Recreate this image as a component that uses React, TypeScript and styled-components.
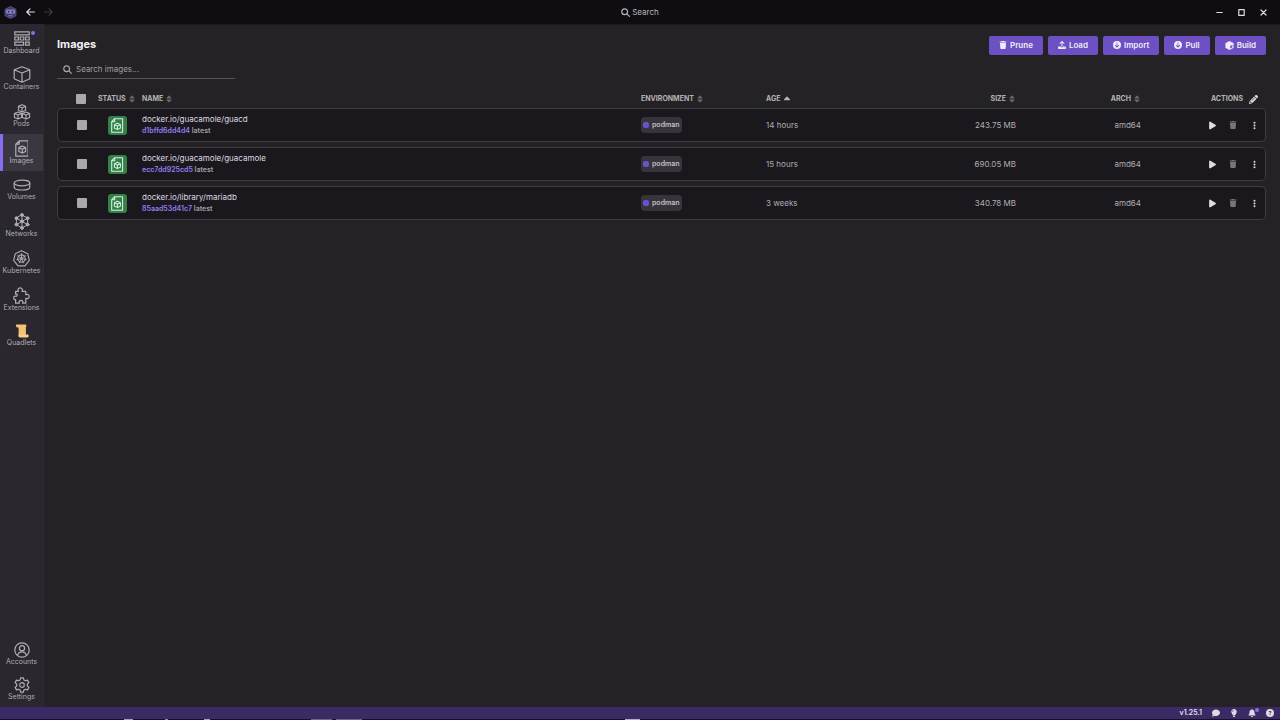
import React from 'react';
import styled, { createGlobalStyle } from 'styled-components';
import { FaTrash, FaUpload, FaCircleArrowDown, FaPlay, FaPencil, FaEllipsisVertical, FaComment, FaLightbulb, FaBell, FaCircleQuestion, FaSort, FaCaretUp } from 'react-icons/fa6';

const GlobalStyle = createGlobalStyle`
  * { box-sizing: border-box; }
  body {
    margin: 0;
    background: #242225;
    color: #c8c5cb;
    font: 400 8px/12px Inter, "Liberation Sans", sans-serif;
  }
  button, input { font: inherit; color: inherit; }
  button { border: 0; padding: 0; background: none; cursor: pointer; }
  svg { display: block; flex: none; }
`;

const Shell = styled.div`
  display: flex;
  flex-direction: column;
  min-height: 100vh;
`;

const TitleBar = styled.header`
  display: grid;
  grid-template-columns: 1fr auto 1fr;
  align-items: center;
  height: 25px;
  background: #0f0d11;
  border-bottom: 1px solid #1b191d;
`;

const BarGroup = styled.div<{ $end?: boolean; $gap: number }>`
  display: flex;
  align-items: center;
  justify-content: ${(p) => (p.$end ? 'flex-end' : 'flex-start')};
  gap: ${(p) => p.$gap}px;
  padding: ${(p) => (p.$end ? '0 13px 0 0' : '0 0 0 4px')};
`;

const IconButton = styled.button<{ $color?: string }>`
  position: relative;
  display: flex;
  align-items: center;
  justify-content: center;
  color: ${(p) => p.$color ?? '#dedce0'};
`;

const SearchButton = styled.button`
  display: flex;
  align-items: center;
  gap: 2px;
  color: #b9b6bc;
`;

const Body = styled.div`
  display: flex;
  flex: 1;
`;

const Sidebar = styled.nav`
  display: flex;
  flex-direction: column;
  justify-content: space-between;
  width: 44px;
  flex: none;
  margin-top: -1px;
  background: #2a272e;
  border-right: 1px solid #2f2c33;
`;

const NavList = styled.div<{ $rows: string }>`
  display: grid;
  grid-template-columns: 100%;
  grid-template-rows: ${(p) => p.$rows};
`;

const NavLink = styled.a<{ $active?: boolean }>`
  display: flex;
  flex-direction: column;
  align-items: center;
  justify-content: flex-end;
  padding-bottom: 6px;
  background: ${(p) => (p.$active ? '#3b3740' : 'transparent')};
  box-shadow: ${(p) => (p.$active ? 'inset 3px 0 #8b6cf0' : 'none')};
  color: #b0adb3;
  font-size: 7px;
  line-height: 8px;
  text-decoration: none;
`;

const NavIcon = styled.span`
  position: relative;
  display: flex;
  align-items: center;
  justify-content: center;
  height: 17px;
`;

const Dot = styled.i<{ $top: number; $right: number }>`
  position: absolute;
  top: ${(p) => p.$top}px;
  right: ${(p) => p.$right}px;
  width: 4px;
  height: 4px;
  border-radius: 50%;
  background: #8b6cf0;
`;

const Main = styled.main`
  flex: 1;
  min-width: 0;
  padding: 11px 14px 0 13px;
`;

const Heading = styled.div`
  display: flex;
  align-items: flex-start;
  justify-content: space-between;
`;

const Title = styled.h1`
  margin: 0;
  color: #f4f2f6;
  font-size: 11px;
  line-height: 16px;
  font-weight: 700;
`;

const Actions = styled.div`
  display: flex;
  gap: 5px;
`;

const PrimaryButton = styled.button`
  display: flex;
  align-items: center;
  gap: 3px;
  height: 19px;
  padding: 0 10px 1px;
  border-radius: 2px;
  background: #6c50c4;
  color: #f0edf8;
  font-weight: 600;
`;

const SearchField = styled.label`
  display: flex;
  align-items: center;
  gap: 4px;
  width: 178px;
  height: 19px;
  margin-top: 5px;
  padding-left: 6px;
  border-bottom: 1px solid #56535a;
  color: #aaa7ad;
  input {
    flex: 1;
    min-width: 0;
    padding: 0;
    border: 0;
    outline: 0;
    background: none;
  }
  input::placeholder { color: #a09da3; opacity: 1; }
`;

const Table = styled.table`
  width: 100%;
  margin-top: 11px;
  table-layout: fixed;
  border-collapse: separate;
  border-spacing: 0 5px;
`;

const Col = styled.col<{ $width?: number }>`
  width: ${(p) => (p.$width ? `${p.$width}px` : 'auto')};
`;

type Align = { $align?: 'left' | 'right'; $inset?: number };

const Th = styled.th<Align>`
  height: 8px;
  padding: 0 ${(p) => p.$inset ?? 0}px 0 0;
  color: #b5b2b8;
  font-size: 7px;
  line-height: 8px;
  font-weight: 700;
  text-align: ${(p) => p.$align ?? 'left'};
`;

const HeadLabel = styled.span<{ $gap?: number }>`
  display: inline-flex;
  align-items: center;
  gap: ${(p) => p.$gap ?? 2}px;
  height: 8px;
  vertical-align: top;
`;

const Td = styled.td<Align>`
  height: 34px;
  padding: 0;
  border: solid #3f3c43;
  border-width: 1px 0;
  background: #1a181d;
  color: #b0adb3;
  text-align: ${(p) => p.$align ?? 'left'};
  &:first-child { border-left-width: 1px; border-radius: 5px 0 0 5px; }
  &:last-child { border-right-width: 1px; border-radius: 0 5px 5px 0; }
`;

const Check = styled.input`
  appearance: none;
  display: block;
  width: 10px;
  height: 10px;
  margin: -1px 0 -1px 19px;
  border-radius: 1px;
  background: #aaa7ad;
`;

const StatusBadge = styled.span`
  display: flex;
  align-items: center;
  justify-content: center;
  width: 19px;
  height: 19px;
  margin-left: 10px;
  border-radius: 3px;
  background: #33804a;
  color: #d9f0df;
`;

const Name = styled.div`
  color: #dddae0;
`;

const Meta = styled.div`
  font-size: 7px;
  font-weight: 600;
  color: #a29fa5;
  b { font-weight: 600; color: #9a7cf0; }
`;

const EnvTag = styled.span`
  display: inline-flex;
  align-items: center;
  gap: 3px;
  height: 16px;
  padding: 0 2px;
  border-radius: 4px;
  background: #37343b;
  color: #c4c1c7;
  font-size: 7px;
  font-weight: 600;
  vertical-align: middle;
  &::before {
    content: '';
    width: 6px;
    height: 6px;
    border-radius: 2px;
    background: #6d50cc;
  }
`;

const RowActions = styled.div`
  display: grid;
  grid-template-columns: repeat(3, 10px);
  column-gap: 11px;
  justify-content: end;
  padding-right: 6px;
`;

const StatusBar = styled.footer`
  display: flex;
  align-items: center;
  justify-content: flex-end;
  gap: 10px;
  height: 12px;
  padding: 0 6px;
  background: #3b2a66;
  color: #e6e2ee;
  font-size: 7px;
  font-weight: 600;
`;

const DesktopEdge = styled.div`
  height: 1px;
  background:
    linear-gradient(90deg, transparent 124px, #a79fc0 124px 133px, transparent 133px 165px, #8d84a6 165px 168px, transparent 168px 204px, #a79fc0 204px 210px, transparent 210px 625px, #b5acc8 625px 640px, transparent 640px),
    linear-gradient(90deg, transparent 311px, #6f667f 311px 332px, transparent 332px 336px, #6f667f 336px 362px, transparent 362px),
    #1a0f2b;
`;

const line = { fill: 'none', stroke: 'currentColor', strokeWidth: 1.2, strokeLinejoin: 'round' as const, strokeLinecap: 'round' as const };

const Logo = () => (
  <svg width="13" height="13" viewBox="0 0 12 12">
    <path d="M6 .5 11 3v6L6 11.5 1 9V3z" fill="#43376f" stroke="#6a5da0" strokeWidth=".7" />
    <rect x="1.8" y="3.3" width="8.4" height="3.8" rx="1.4" fill="#8288bd" />
    <circle cx="4.2" cy="5.2" r=".8" fill="#2b2350" />
    <circle cx="7.8" cy="5.2" r=".8" fill="#2b2350" />
    <path d="M4 9h4" stroke="#8a6fc4" />
  </svg>
);

const Arrow = ({ back }: { back?: boolean }) => (
  <svg width="9" height="8" viewBox="0 0 9 8" {...line}>
    <path d={back ? 'M8.4 4H.8M4 .8.8 4 4 7.2' : 'M.6 4h7.6M5 .8 8.2 4 5 7.2'} />
  </svg>
);

const Magnifier = () => (
  <svg width="9" height="9" viewBox="0 0 9 9" {...line}>
    <circle cx="3.7" cy="3.7" r="2.9" />
    <path d="m5.9 5.9 2.5 2.5" />
  </svg>
);

const DashboardIcon = () => (
  <svg width="16" height="15" viewBox="0 0 16 15" {...line} strokeLinejoin="miter">
    <path d="M.8.8h14.4v3H.8zM.8 6h3.6v3H.8zM6.2 6h3.6v3H6.2zM11.6 6h3.6v3h-3.6zM.8 11.2h8.8v3H.8zM11.6 11.2h3.6v3h-3.6z" />
  </svg>
);

const ContainerIcon = () => (
  <svg width="18" height="17" viewBox="0 0 18 17" {...line}>
    <path d="M9 .8 16.8 3.8v9L9 16.2 1.2 12.8v-9zM1.2 3.8 9 7l7.8-3.2M9 7v9.2" />
  </svg>
);

const cube = (x: number, y: number) =>
  `M${x} ${y}l3.6 1.5v4l-3.6 1.6-3.6-1.6V${y + 1.5}zM${x - 3.6} ${y + 1.5}l3.6 1.6 3.6-1.6M${x} ${y + 3.1}v4`;

const PodsIcon = () => (
  <svg width="18" height="16" viewBox="0 0 18 16" {...line} strokeWidth={1.1}>
    <path d={cube(9, 0.8) + cube(5, 8) + cube(13, 8)} />
  </svg>
);

const ImageIcon = ({ size = 17 }: { size?: number }) => (
  <svg width={size * 0.82} height={size} viewBox="0 0 14 17" {...line}>
    <path d="M4.2.8h9v15.4H.8V4.2zM4.2.8v3.4H.8" />
    <path d="m7.3 6 3.4 1.6v3.9l-3.4 1.6-3.4-1.6V7.6zM3.9 7.6l3.4 1.6 3.4-1.6M7.3 9.2v3.9" />
  </svg>
);

const VolumeIcon = () => (
  <svg width="18" height="12" viewBox="0 0 18 12" {...line}>
    <ellipse cx="9" cy="4" rx="7.8" ry="2.8" />
    <path d="M1.2 4v4.2C1.2 9.8 4.6 11 9 11s7.8-1.2 7.8-2.8V4" />
  </svg>
);

const hex = [[8, 2], [13.6, 5.2], [13.6, 11.6], [8, 15], [2.4, 11.6], [2.4, 5.2]];

const NetworkIcon = () => (
  <svg width="16" height="17" viewBox="0 0 16 17" {...line} strokeWidth={1}>
    <path d={`M${hex.map((p) => p.join(' ')).join('L')}z`} />
    <path d={hex.map(([x, y]) => `M8 8.4 ${x} ${y}`).join('')} />
    {[...hex, [8, 8.4]].map(([x, y]) => <circle key={`${x}-${y}`} cx={x} cy={y} r="1.4" fill="currentColor" />)}
  </svg>
);

const KubernetesIcon = () => (
  <svg width="17" height="17" viewBox="0 0 17 17" {...line} strokeWidth={1.1}>
    <path d="M8.5.8 14.8 3.8 16.3 10.4 12 15.9H5L.7 10.4 2.2 3.8z" />
    <circle cx="8.5" cy="8.6" r="3.7" />
    <circle cx="8.5" cy="8.6" r=".8" />
    <path strokeWidth=".9" d="M8.5 3.6v4.2M12.3 5.6 9.2 8M13.2 9.7 9.3 8.8M10.6 12.9 8.9 9.4M6.4 12.9l1.7-3.5M3.8 9.7l3.9-.9M4.7 5.6 7.8 8" />
  </svg>
);

const ExtensionsIcon = () => (
  <svg width="17" height="17" viewBox="0 0 17 17" {...line}>
    <path d="M5.4 4.4c-1-1.6-.2-3.6 1.8-3.6s2.8 2 1.8 3.6h3.8v3.4c1.6-1 3.4-.2 3.4 1.7s-1.8 2.7-3.4 1.7v5H9.6c.7-1.7-.1-2.9-1.6-2.9s-2.3 1.2-1.6 2.9H2.6v-3.6c-1.2.3-1.9-.5-1.9-1.7s.9-2 1.9-1.7c.9.3 1.6-.3 1.6-1.3S3.4 6.6 2.6 7.2V4.4z" />
  </svg>
);

const ScrollIcon = () => (
  <svg width="14" height="14" viewBox="0 0 14 14">
    <path d="M1.6.6h8.9c1.2 0 1.2 2.2.4 2.4v8H3.6V3.4H2.3C.7 3.4.6.6 1.6.6z" fill="#f3c277" />
    <path d="M4 10.6h8.6c1.4 0 1.4 2.8 0 2.8H5c-1.8 0-2.2-1.8-1-2.8z" fill="#f8cf8c" />
  </svg>
);

const AccountIcon = () => (
  <svg width="16" height="16" viewBox="0 0 16 16" {...line}>
    <circle cx="8" cy="8" r="7.2" />
    <circle cx="8" cy="6.2" r="2.6" />
    <path d="M3.6 13.4c.6-2.6 2.2-3.6 4.4-3.6s3.8 1 4.4 3.6" />
  </svg>
);

const SettingsIcon = () => (
  <svg width="16" height="16" viewBox="0 0 16 16" {...line}>
    <path d="M6.6.8h2.8l.5 2.1 1.5.9 2.1-.7 1.4 2.5L13.3 7v2l1.6 1.4-1.4 2.5-2.1-.7-1.5.9-.5 2.1H6.6l-.5-2.1-1.5-.9-2.1.7-1.4-2.5L2.7 9V7L1.1 5.6l1.4-2.5 2.1.7 1.5-.9z" />
    <circle cx="8" cy="8" r="2.3" />
  </svg>
);

const BuildIcon = () => (
  <svg width="9" height="9" viewBox="0 0 9 9">
    <path d="M4.5.3 8.3 2.2v4.6L4.5 8.7.7 6.8V2.2z" fill="currentColor" stroke="currentColor" strokeWidth=".5" strokeLinejoin="round" />
    <path d="m5.2 4.9 2.2-1.1v2.4L5.2 7.4z" fill="#6c50c4" />
  </svg>
);

const nav = [
  { label: 'Dashboard', icon: <DashboardIcon />, dot: true },
  { label: 'Containers', icon: <ContainerIcon /> },
  { label: 'Pods', icon: <PodsIcon /> },
  { label: 'Images', icon: <ImageIcon />, active: true },
  { label: 'Volumes', icon: <VolumeIcon /> },
  { label: 'Networks', icon: <NetworkIcon /> },
  { label: 'Kubernetes', icon: <KubernetesIcon /> },
  { label: 'Extensions', icon: <ExtensionsIcon /> },
  { label: 'Quadlets', icon: <ScrollIcon /> },
];

const bottomNav = [
  { label: 'Accounts', icon: <AccountIcon /> },
  { label: 'Settings', icon: <SettingsIcon /> },
];

const images = [
  { name: 'docker.io/guacamole/guacd', id: 'd1bffd6dd4d4', age: '14 hours', size: '243.75 MB' },
  { name: 'docker.io/guacamole/guacamole', id: 'ecc7dd925cd5', age: '15 hours', size: '690.05 MB' },
  { name: 'docker.io/library/mariadb', id: '85aad53d41c7', age: '3 weeks', size: '340.78 MB' },
];

type NavItem = { label: string; icon: React.ReactNode; dot?: boolean; active?: boolean };

const Nav = ({ items, rows }: { items: NavItem[]; rows: string }) => (
  <NavList $rows={rows}>
    {items.map((item) => (
      <NavLink key={item.label} href="#" $active={item.active}>
        <NavIcon>{item.icon}{item.dot && <Dot $top={1} $right={-5} />}</NavIcon>
        {item.label}
      </NavLink>
    ))}
  </NavList>
);

const Sortable = ({ children }: { children: string }) => (
  <HeadLabel>{children}<FaSort size={8} color="#6b686e" /></HeadLabel>
);

export default function App() {
  return (
    <Shell>
      <GlobalStyle />
      <TitleBar>
        <BarGroup $gap={9}>
          <Logo />
          <IconButton aria-label="Back"><Arrow back /></IconButton>
          <IconButton aria-label="Forward" $color="#3d3a40"><Arrow /></IconButton>
        </BarGroup>
        <SearchButton><Magnifier />Search</SearchButton>
        <BarGroup $gap={15} $end>
          <IconButton aria-label="Minimize"><svg width="7" height="7" viewBox="0 0 7 7" {...line}><path d="M.8 3.5h5.4" /></svg></IconButton>
          <IconButton aria-label="Maximize"><svg width="7" height="7" viewBox="0 0 7 7" {...line}><path d="M.8.6h5.4v5.8H.8z" /></svg></IconButton>
          <IconButton aria-label="Close"><svg width="7" height="7" viewBox="0 0 7 7" {...line}><path d="m1 1 5 5M6 1 1 6" /></svg></IconButton>
        </BarGroup>
      </TitleBar>
      <Body>
        <Sidebar>
          <Nav items={nav} rows="37px 36px 37px 37px 36px 37px 37px 37px 35px" />
          <Nav items={bottomNav} rows="35px 35px" />
        </Sidebar>
        <Main>
          <Heading>
            <Title>Images</Title>
            <Actions>
              <PrimaryButton><FaTrash size={8} />Prune</PrimaryButton>
              <PrimaryButton><FaUpload size={8} />Load</PrimaryButton>
              <PrimaryButton><FaCircleArrowDown size={8} />Import</PrimaryButton>
              <PrimaryButton><FaCircleArrowDown size={8} />Pull</PrimaryButton>
              <PrimaryButton><BuildIcon />Build</PrimaryButton>
            </Actions>
          </Heading>
          <SearchField>
            <Magnifier />
            <input type="text" aria-label="Search images" placeholder="Search images..." />
          </SearchField>
          <Table>
            <colgroup>
              <Col $width={41} /><Col $width={44} /><Col /><Col $width={125} /><Col $width={125} /><Col $width={125} /><Col $width={125} /><Col $width={125} />
            </colgroup>
            <thead>
              <tr>
                <Th><Check type="checkbox" aria-label="Select all images" /></Th>
                <Th><Sortable>STATUS</Sortable></Th>
                <Th><Sortable>NAME</Sortable></Th>
                <Th><Sortable>ENVIRONMENT</Sortable></Th>
                <Th><HeadLabel>AGE<FaCaretUp size={10} /></HeadLabel></Th>
                <Th $align="right"><Sortable>SIZE</Sortable></Th>
                <Th $align="right"><Sortable>ARCH</Sortable></Th>
                <Th $align="right" $inset={8}>
                  <HeadLabel $gap={6}>ACTIONS<IconButton aria-label="Edit columns"><FaPencil size={9} /></IconButton></HeadLabel>
                </Th>
              </tr>
            </thead>
            <tbody>
              {images.map((image) => (
                <tr key={image.id}>
                  <Td><Check type="checkbox" aria-label={`Select ${image.name}`} /></Td>
                  <Td><StatusBadge><ImageIcon size={15} /></StatusBadge></Td>
                  <Td><Name>{image.name}</Name><Meta><b>{image.id}</b> latest</Meta></Td>
                  <Td><EnvTag>podman</EnvTag></Td>
                  <Td>{image.age}</Td>
                  <Td $align="right">{image.size}</Td>
                  <Td $align="right">amd64</Td>
                  <Td>
                    <RowActions>
                      <IconButton aria-label="Run image"><FaPlay size={9} /></IconButton>
                      <IconButton aria-label="Delete image" $color="#78757b"><FaTrash size={8} /></IconButton>
                      <IconButton aria-label="More actions"><FaEllipsisVertical size={9} /></IconButton>
                    </RowActions>
                  </Td>
                </tr>
              ))}
            </tbody>
          </Table>
        </Main>
      </Body>
      <StatusBar>
        v1.25.1
        <IconButton aria-label="Feedback"><FaComment size={8} /></IconButton>
        <IconButton aria-label="Tips"><FaLightbulb size={8} /></IconButton>
        <IconButton aria-label="Notifications"><FaBell size={8} /><Dot $top={-1} $right={-3} /></IconButton>
        <IconButton aria-label="Help"><FaCircleQuestion size={8} /></IconButton>
      </StatusBar>
      <DesktopEdge />
    </Shell>
  );
}
